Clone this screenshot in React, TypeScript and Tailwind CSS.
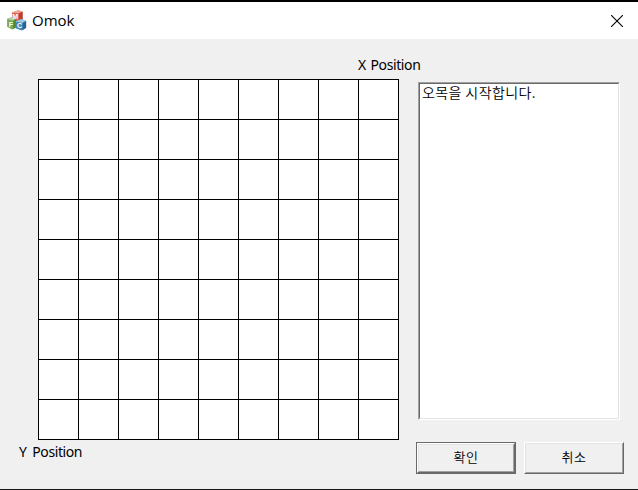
import type { ReactNode } from "react";

function AppIcon() {
  return (
    <svg width="20" height="21" viewBox="0 0 20 21" aria-hidden="true">
      <path d="M5 2.4 11.4.3l4.2 1.4v7.8l-4.2 2.3L5 10z" fill="#dc6550" />
      <path d="M5 2.4 11.4.3l4.2 1.4-3.9 1.5z" fill="#f0a798" />
      <path d="m12 3.2 3.6-1.5v7.8L12 11.6z" fill="#b93f30" />
      <path d="m.1 8.9 4.8-1.6L9 9v8.3l-3.7 2.3-5.2-2.8z" fill="#78a852" />
      <path d="m.1 8.9 4.8-1.6L9 9l-3.3 1.7z" fill="#add091" />
      <path d="M6.5 10.5 9 9v8.3l-3 2z" fill="#4d8934" />
      <path d="m8.5 11.6 6-2.7 4.6 2v6.8l-4.4 2.9-6.2-2.4z" fill="#4389b9" />
      <path d="m8.5 11.6 6-2.7 4.6 2-3.5 2z" fill="#9bc8df" />
      <path d="m15.8 12.8 3.3-1.9v6.8l-3.6 2.5z" fill="#28648f" />
      <g fill="#fff" fontFamily="Liberation Sans, sans-serif" fontWeight="bold" fontSize="7">
        <text x="5.2" y="9.3">M</text>
        <text x="1.7" y="16.5">F</text>
        <text x="10" y="18.2">C</text>
      </g>
    </svg>
  );
}

function DialogButton({ children, isDefault = false }: { children: ReactNode; isDefault?: boolean }) {
  return (
    <button className={`h-8 w-[100px] ${isDefault ? "border border-[#696969]" : ""}`}>
      <span className="block h-full border border-t-white border-l-white border-r-[#696969] border-b-[#696969]">
        <span className="flex h-full items-center justify-center border border-t-[#e3e3e3] border-l-[#e3e3e3] border-r-[#a0a0a0] border-b-[#a0a0a0] pb-[3px] tracking-[0.5px]">
          {children}
        </span>
      </span>
    </button>
  );
}

export default function App() {
  return (
    <main
      className="flex h-[490px] w-[638px] flex-col overflow-hidden border-t-2 border-b border-t-black border-b-[#171717] bg-[#f0f0f0] font-[Noto_Sans_CJK_KR,sans-serif] text-[13px] font-[350] text-black"
    >
      <header className="flex h-[37px] shrink-0 items-center bg-white pr-[15px] pl-[7px]">
        <AppIcon />
        <h1 className="ml-[5px] pb-0.5 font-[Open_Sans,sans-serif] text-[15px] leading-5 font-normal">Omok</h1>
        <button className="ml-auto" aria-label="Close">
          <svg width="12" height="12" viewBox="0 0 12 12" stroke="#000" strokeWidth="1.1">
            <path d="m0 0 12 12M12 0 0 12" />
          </svg>
        </button>
      </header>
      <div className="h-10 shrink-0 pt-4 pl-[358px] font-[Noto_Sans,sans-serif] text-[14px] leading-5 font-normal tracking-[-0.4px] [word-spacing:1.5px]">
        X Position
      </div>
      <div className="flex">
        <section className="w-[416px] shrink-0">
          <div className="ml-[38px] grid w-[361px] grid-cols-9 border-t border-l border-black bg-white">
            {Array.from({ length: 81 }, (_, cell) => (
              <div key={cell} className="h-10 w-10 border-r border-b border-black" />
            ))}
          </div>
          <div className="pt-[2px] pl-[19px] font-[Noto_Sans,sans-serif] text-[14px] leading-5 font-normal tracking-[-0.4px] [word-spacing:2.5px]">
            Y Position
          </div>
        </section>
        <section className="pt-[3px]">
          <div className="ml-0.5 h-[338px] w-[202px] border border-t-[#a0a0a0] border-l-[#a0a0a0] border-r-white border-b-white">
            <div className="h-full border border-t-[#696969] border-l-[#696969] border-r-[#e3e3e3] border-b-[#e3e3e3] bg-white pl-0.5 text-[14px] leading-[16px] tracking-[0.4px]">
              오목을 시작합니다.
            </div>
          </div>
          <div className="mt-[22px] flex gap-2">
            <DialogButton isDefault>확인</DialogButton>
            <DialogButton>취소</DialogButton>
          </div>
        </section>
      </div>
    </main>
  );
}
